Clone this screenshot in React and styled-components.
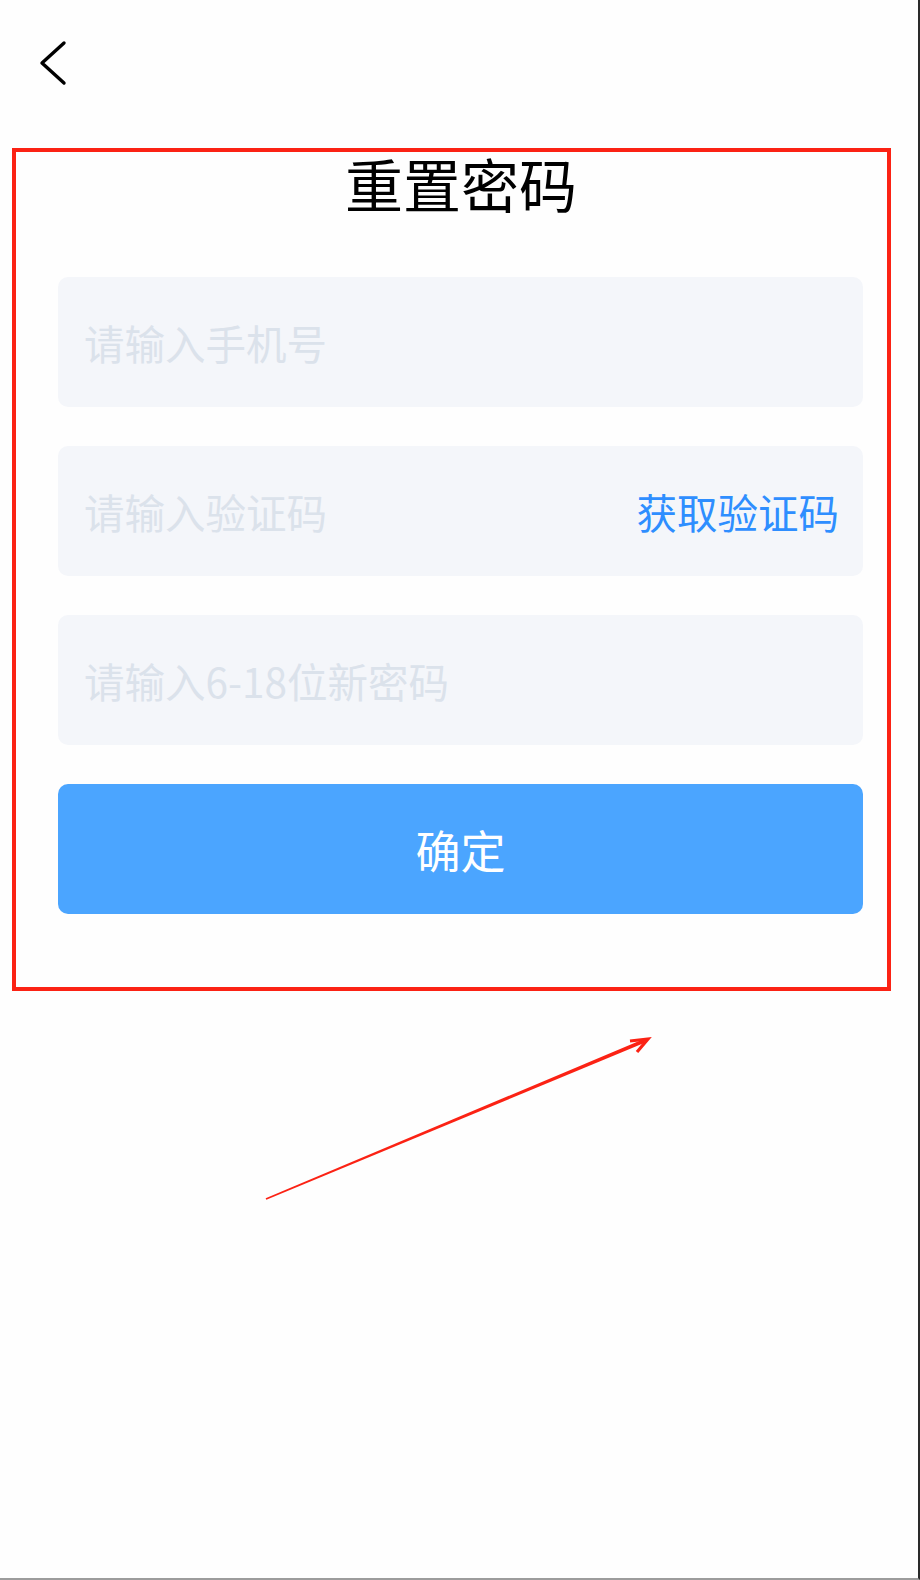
import React from "react";
import styled, { createGlobalStyle } from "styled-components";

const GlobalStyle = createGlobalStyle`
  html, body { margin: 0; padding: 0; background: #ffffff; }
  * { box-sizing: border-box; }
  body { font-family: "Noto Sans CJK SC", "Noto Sans", sans-serif; }
`;

const Page = styled.div`
  position: relative;
  width: 920px;
  height: 1580px;
  background: #fefefe;
  border-right: 2px solid #2a2a2a;
  border-bottom: 2px solid #9c9c9c;
  overflow: hidden;
`;

const Header = styled.header`
  height: 152px;
  padding: 40px 0 0 38px;
  display: flex;
  align-items: flex-start;
`;

const BackButton = styled.button`
  border: none;
  background: none;
  padding: 0;
  width: 30px;
  height: 46px;
  cursor: pointer;
  display: block;
`;

const Title = styled.h1`
  margin: 0;
  text-align: center;
  font-family: "Noto Sans CJK SC", sans-serif;
  font-weight: 400;
  font-size: 58px;
  line-height: 62px;
  color: #000;
  padding-left: 4px;
`;

const Form = styled.form`
  margin: 63px 55px 0 58px;
  display: flex;
  flex-direction: column;
  gap: 39px;
`;

const Field = styled.div`
  height: 130px;
  border-radius: 10px;
  background: #f4f6fa;
  display: flex;
  align-items: center;
  padding: 0 24px 0 26px;
`;

const Input = styled.input`
  flex: 1;
  min-width: 0;
  border: none;
  outline: none;
  background: transparent;
  font-family: "Noto Sans CJK SC", sans-serif;
  font-size: 40.5px;
  color: #333;
  padding: 0;
  &::placeholder { color: #dbe2eb; }
`;

const CodeLink = styled.span`
  font-family: "Noto Sans CJK SC", sans-serif;
  font-size: 40.5px;
  color: #2e8eff;
  white-space: nowrap;
`;

const Submit = styled.button`
  height: 130px;
  border: none;
  border-radius: 10px;
  background: #4ba5ff;
  color: #ffffff;
  font-family: "Noto Sans CJK SC", sans-serif;
  font-size: 45px;
  cursor: pointer;
`;

const Highlight = styled.div`
  position: absolute;
  left: 12px;
  top: 148px;
  width: 879px;
  height: 843px;
  border: 4px solid #fb2214;
  pointer-events: none;
`;

const ArrowLayer = styled.svg`
  position: absolute;
  left: 0;
  top: 0;
  pointer-events: none;
`;

export default function App() {
  const sx = 266, sy = 1199, ex = 644, ey = 1041;
  const dx = ex - sx, dy = ey - sy;
  const len = Math.hypot(dx, dy);
  const px = -dy / len, py = dx / len;
  const w0 = 0.9, w1 = 1.9;
  const poly = [
    [sx + px * w0, sy + py * w0],
    [ex + px * w1, ey + py * w1],
    [ex - px * w1, ey - py * w1],
    [sx - px * w0, sy - py * w0],
  ]
    .map((p) => p.join(","))
    .join(" ");

  return (
    <>
      <GlobalStyle />
      <Page>
        <Header>
          <BackButton aria-label="返回">
            <svg width="30" height="46" viewBox="0 0 30 46">
              <path
                d="M26 3 L4 23 L26 43"
                fill="none"
                stroke="#000"
                strokeWidth="3.4"
                strokeLinecap="round"
                strokeLinejoin="round"
              />
            </svg>
          </BackButton>
        </Header>
        <Title>重置密码</Title>
        <Form onSubmit={(e) => e.preventDefault()}>
          <Field>
            <Input placeholder="请输入手机号" />
          </Field>
          <Field>
            <Input placeholder="请输入验证码" />
            <CodeLink>获取验证码</CodeLink>
          </Field>
          <Field>
            <Input placeholder="请输入6-18位新密码" type="password" />
          </Field>
          <Submit type="submit">确定</Submit>
        </Form>
        <Highlight />
        <ArrowLayer width="920" height="1580" viewBox="0 0 920 1580">
          <polygon points={poly} fill="#fb2214" />
          <path
            d="M630 1041 L648 1039 L637 1052"
            fill="none"
            stroke="#fb2214"
            strokeWidth="3.2"
            strokeLinejoin="miter"
          />
        </ArrowLayer>
      </Page>
    </>
  );
}
